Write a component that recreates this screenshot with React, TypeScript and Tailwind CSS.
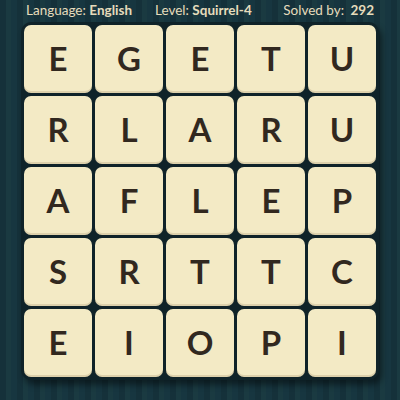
const rows = [
  ["E", "G", "E", "T", "U"],
  ["R", "L", "A", "R", "U"],
  ["A", "F", "L", "E", "P"],
  ["S", "R", "T", "T", "C"],
  ["E", "I", "O", "P", "I"],
];

export default function App() {
  return (
    <div
      className="w-[400px] h-[400px] overflow-hidden flex flex-col items-center bg-[#16343b] bg-[repeating-linear-gradient(90deg,#15313a_0px,#15313a_6px,#1a3a41_6px,#1a3a41_11px,#173640_11px,#173640_17px)]"
      style={{ fontFamily: "Lato, 'Open Sans', sans-serif" }}
    >
      {/* Header */}
      <div className="w-full h-[22px] flex items-center pl-[26px] pr-[26px] text-[13.5px] leading-none text-[#e6dcbc]">
        <span className="w-[129px]">
          Language: <span className="font-bold">English</span>
        </span>
        <span className="flex-1">
          Level: <span className="font-bold">Squirrel-4</span>
        </span>
        <span>
          Solved by: <span className="font-bold ml-[3px]">292</span>
        </span>
      </div>

      {/* Board */}
      <div className="p-[3px] rounded-[10px] bg-[#0f2329] shadow-[3px_5px_6px_rgba(0,0,0,0.45)]">
        <div className="grid grid-cols-5 gap-[3px]">
          {rows.flat().map((ch, i) => (
            <div
              key={i}
              className="w-[68px] h-[68px] rounded-[7px] bg-[#f3eac5] shadow-[inset_0_-2px_0_rgba(120,100,60,0.18)] flex items-center justify-center text-[33px] font-bold text-[#31281f]"
            >
              {ch}
            </div>
          ))}
        </div>
      </div>
    </div>
  );
}
